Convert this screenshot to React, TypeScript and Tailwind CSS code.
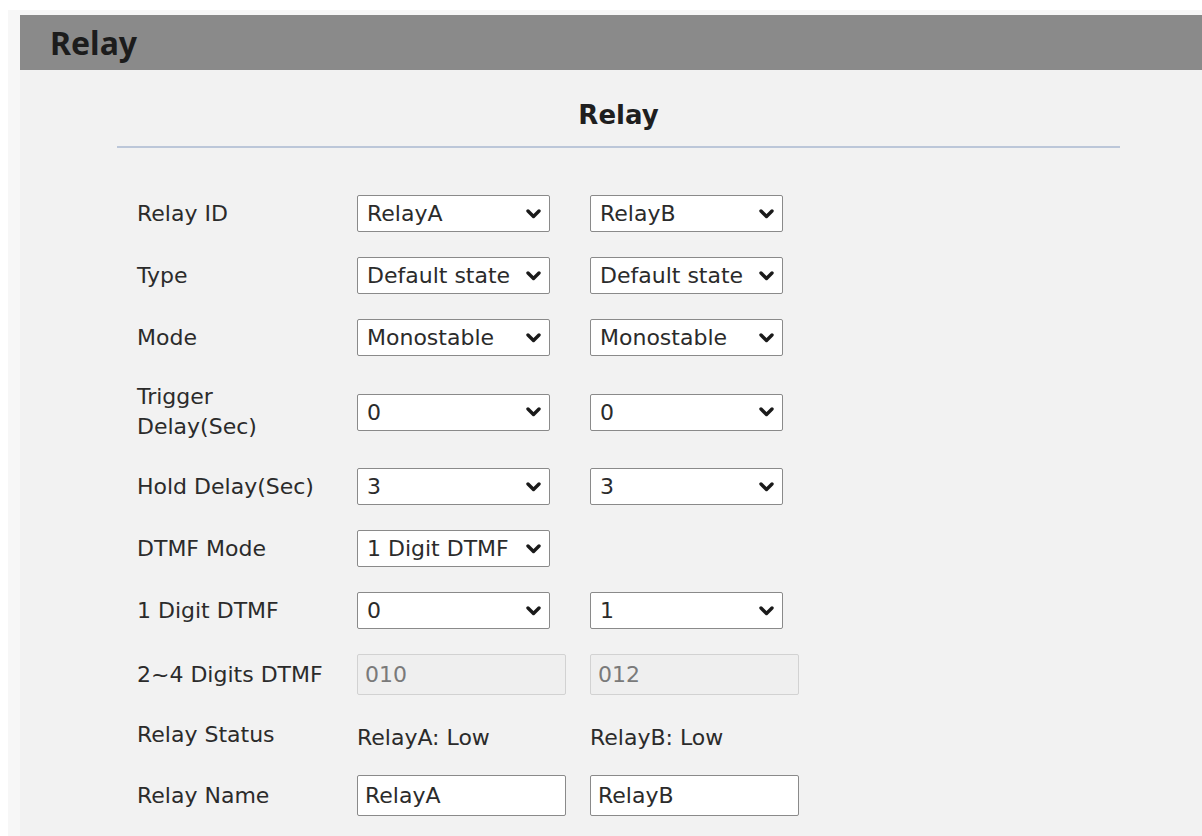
import React from 'react';

type Cell =
  | { kind: 'select'; value: string; options?: string[] }
  | { kind: 'input'; value: string; disabled?: boolean }
  | { kind: 'text'; value: string };

type Row = { label: string; cells: Cell[]; height: string };

const rows: Row[] = [
  {
    label: 'Relay ID',
    height: 'h-[37px]',
    cells: [
      { kind: 'select', value: 'RelayA', options: ['RelayA', 'RelayB'] },
      { kind: 'select', value: 'RelayB', options: ['RelayA', 'RelayB'] },
    ],
  },
  {
    label: 'Type',
    height: 'h-[37px]',
    cells: [
      { kind: 'select', value: 'Default state', options: ['Default state', 'Invert state'] },
      { kind: 'select', value: 'Default state', options: ['Default state', 'Invert state'] },
    ],
  },
  {
    label: 'Mode',
    height: 'h-[37px]',
    cells: [
      { kind: 'select', value: 'Monostable', options: ['Monostable', 'Bistable'] },
      { kind: 'select', value: 'Monostable', options: ['Monostable', 'Bistable'] },
    ],
  },
  {
    label: 'Trigger Delay(Sec)',
    height: 'h-[62px]',
    cells: [
      { kind: 'select', value: '0' },
      { kind: 'select', value: '0' },
    ],
  },
  {
    label: 'Hold Delay(Sec)',
    height: 'h-[37px]',
    cells: [
      { kind: 'select', value: '3' },
      { kind: 'select', value: '3' },
    ],
  },
  {
    label: 'DTMF Mode',
    height: 'h-[37px]',
    cells: [{ kind: 'select', value: '1 Digit DTMF', options: ['1 Digit DTMF', '2~4 Digits DTMF'] }],
  },
  {
    label: '1 Digit DTMF',
    height: 'h-[37px]',
    cells: [
      { kind: 'select', value: '0' },
      { kind: 'select', value: '1' },
    ],
  },
  {
    label: '2~4 Digits DTMF',
    height: 'h-[41px]',
    cells: [
      { kind: 'input', value: '010', disabled: true },
      { kind: 'input', value: '012', disabled: true },
    ],
  },
  {
    label: 'Relay Status',
    height: 'h-[30px]',
    cells: [
      { kind: 'text', value: 'RelayA: Low' },
      { kind: 'text', value: 'RelayB: Low' },
    ],
  },
  {
    label: 'Relay Name',
    height: 'h-[41px]',
    cells: [
      { kind: 'input', value: 'RelayA' },
      { kind: 'input', value: 'RelayB' },
    ],
  },
];

const digits = ['0', '1', '2', '3', '4', '5', '6', '7', '8', '9'];

function Chevron() {
  return (
    <svg width="15" height="10" viewBox="0 0 15 10" className="pointer-events-none absolute right-[9px] top-1/2 -translate-y-1/2">
      <polyline points="2,2 7.5,7.5 13,2" fill="none" stroke="#1a1a1a" strokeWidth="3.4" strokeLinecap="round" strokeLinejoin="round" />
    </svg>
  );
}

function Field({ cell }: { cell: Cell }) {
  if (cell.kind === 'select') {
    const opts = cell.options ?? digits;
    return (
      <div className="relative w-[193px] h-[37px]">
        <select
          defaultValue={cell.value}
          className="appearance-none w-full h-full rounded-[2px] border border-[#8a8a8a] bg-white pl-[9px] pr-[26px] text-[22px] text-[#2b2b2b] outline-none"
        >
          {opts.map((o) => (
            <option key={o} value={o}>
              {o}
            </option>
          ))}
        </select>
        <Chevron />
      </div>
    );
  }
  if (cell.kind === 'input') {
    return (
      <input
        defaultValue={cell.value}
        disabled={cell.disabled}
        className={
          cell.disabled
            ? 'w-[209px] h-[41px] rounded-[2px] border border-[#d2d2d2] bg-[#efefef] px-[7px] text-[22px] text-[#7a7a7a]'
            : 'w-[209px] h-[41px] rounded-[2px] border border-[#8a8a8a] bg-white px-[7px] text-[22px] text-[#2b2b2b] outline-none'
        }
      />
    );
  }
  return <span className="mt-[6px] text-[22px] text-[#2b2b2b] leading-[30px]">{cell.value}</span>;
}

export default function App() {
  return (
    <div className="min-h-screen bg-white pt-[10px] pl-[8px] font-['DejaVu_Sans',sans-serif]">
      <div className="min-h-[826px] bg-[#f7f7f7] pt-[5px] pl-[12px] flex flex-col">
        <div className="h-[55px] bg-[#8a8a8a] flex items-center pl-[30px]">
          <h1 className="font-['Noto_Sans',sans-serif] font-bold text-[32px] leading-none text-[#1c1c1c]">Relay</h1>
        </div>

        <div className="flex-1 bg-[#f2f2f2] pt-[30px]">
          <div className="ml-[97px] w-[1003px]">
            <h2 className="text-center font-bold text-[26px] leading-[30px] text-[#1f1f1f]">Relay</h2>
            <div className="mt-[16px] h-[2px] bg-[#bcc7d9]" />
          </div>

          <div className="mt-[47px] ml-[117px] flex flex-col gap-[25px]">
            {rows.map((row) => (
              <div key={row.label} className={`flex items-center ${row.height}`}>
                <div className="w-[220px] pr-[20px] text-[22px] leading-[30px] text-[#2b2b2b]">{row.label}</div>
                {row.cells.map((cell, i) => (
                  <div key={i} className={i === 0 ? 'w-[233px] flex items-center' : 'flex items-center'}>
                    <Field cell={cell} />
                  </div>
                ))}
              </div>
            ))}
          </div>
        </div>
      </div>
    </div>
  );
}
